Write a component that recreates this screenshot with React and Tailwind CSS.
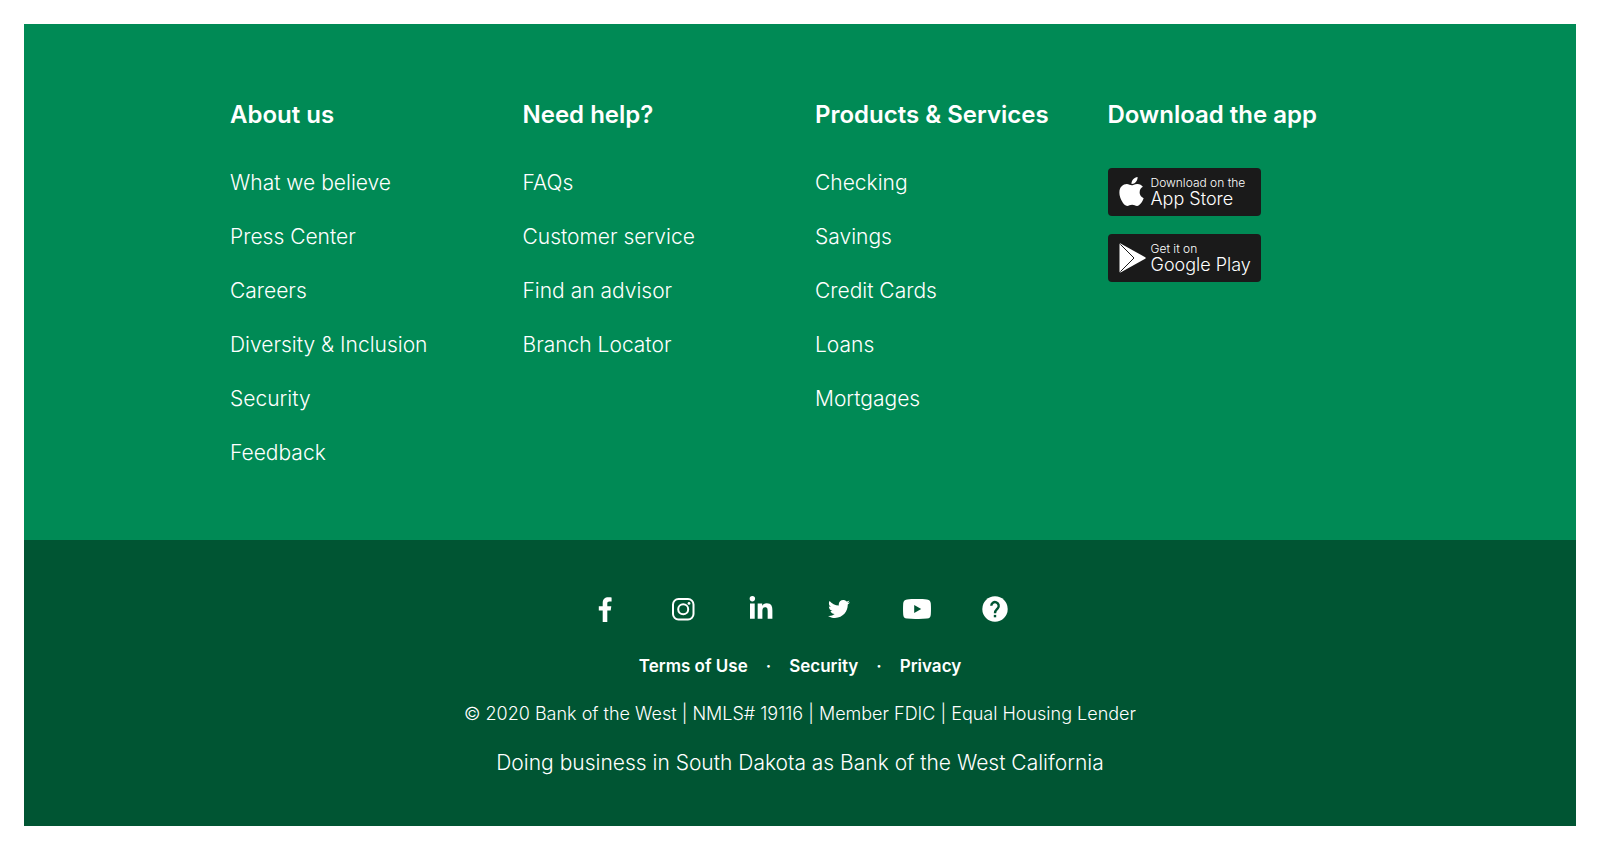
import React from "react";
import { FaApple, FaLinkedinIn, FaTwitter } from "react-icons/fa";

const columns = [
  { title: "About us", links: ["What we believe", "Press Center", "Careers", "Diversity & Inclusion", "Security", "Feedback"] },
  { title: "Need help?", links: ["FAQs", "Customer service", "Find an advisor", "Branch Locator"] },
  { title: "Products & Services", links: ["Checking", "Savings", "Credit Cards", "Loans", "Mortgages"] },
];

function FacebookIcon() {
  return (
    <svg viewBox="0 0 14 25" className="h-[25px] w-[14px]" fill="currentColor" aria-hidden="true">
      <path d="M4.700 25V13.600H.8V9.200h3.900V6C4.700 2.200 6.900.2 10.400.2c1.300 0 2.500.1 3.200.2v4h-2.200c-1.700 0-2.100.8-2.100 2v2.800h4l-.6 4.400H9.300V25Z" />
    </svg>
  );
}

function InstagramIcon() {
  return (
    <svg viewBox="0 0 24 24" className="size-6" fill="none" stroke="currentColor" strokeWidth="2" aria-hidden="true">
      <rect x="2" y="2" width="20.500" height="20.500" rx="5.500" />
      <circle cx="12.200" cy="12.200" r="5" />
      <circle cx="18" cy="6.400" r="1.400" fill="currentColor" stroke="none" />
    </svg>
  );
}

function YouTubeIcon() {
  return (
    <svg viewBox="0 0 28 20" className="h-5 w-7" fill="currentColor" aria-hidden="true">
      <path fillRule="evenodd" d="M14 0c4 0 7.500.15 10 .4C26.600.7 27.600 2 27.800 4.600c.25 3.600.25 7.200 0 10.800-.2 2.600-1.200 3.900-3.800 4.200-6.600.55-13.400.55-20 0C1.400 19.300.4 18 .2 15.400c-.25-3.600-.25-7.200 0-10.800C.4 2 1.400.7 4 .4 6.500.15 10 0 14 0ZM11.200 6v8l7-4Z" />
    </svg>
  );
}

function HelpIcon() {
  return (
    <svg viewBox="0 0 26 26" className="size-[26px]" fill="none" aria-hidden="true">
      <circle cx="13" cy="13" r="12.700" fill="currentColor" />
      <path d="M9.300 9.800a3.700 3.700 0 1 1 6.500 2.400c-1.200 1.400-2.800 2.100-2.800 5" stroke="#005533" strokeWidth="2.400" />
      <rect x="11.800" y="18.900" width="2.400" height="2.400" fill="#005533" />
    </svg>
  );
}

function PlayIcon() {
  return (
    <svg viewBox="0 0 27 30" className="w-full" aria-hidden="true">
      <path fill="#fff" d="M.5 1.800C.5.5 1.400.4 2.400.9L26.200 14.200c.7.400.7 1.200 0 1.600L2.400 29.100C1.400 29.600.5 29.500.5 28.200Z" />
      <path fill="none" stroke="#1a1a1a" strokeWidth="1" d="M1.400 1.400 15 15 1.400 28.600" />
    </svg>
  );
}

const socials = [
  { label: "Facebook", icon: <FacebookIcon /> },
  { label: "Instagram", icon: <InstagramIcon /> },
  { label: "LinkedIn", icon: <FaLinkedinIn className="size-[26px]" /> },
  { label: "Twitter", icon: <FaTwitter className="size-[22px]" /> },
  { label: "YouTube", icon: <YouTubeIcon /> },
  { label: "Help", icon: <HelpIcon /> },
];

function StoreBadge({ icon, small, large }) {
  return (
    <a href="#" className="flex h-12 w-[153px] items-center rounded bg-[#1a1a1a] pl-[11px]">
      <span className="flex w-[27px] shrink-0">{icon}</span>
      <span className="ml-[5px] flex flex-col font-[350] whitespace-nowrap">
        <span className="text-[12px] leading-[14px]">{small}</span>
        <span className="text-[18px] leading-[18px]">{large}</span>
      </span>
    </a>
  );
}

export default function App() {
  return (
    <div className="p-6 font-['Inter',sans-serif] text-white">
      <footer>
        <div className="bg-[#008a55] pt-[73px] pb-[72px]">
          <div className="mx-auto grid max-w-[1170px] grid-cols-4">
            {columns.map((c) => (
              <nav key={c.title} aria-label={c.title} className="px-[15px]">
                <h2 className="mb-[35px] text-2xl leading-9 font-semibold whitespace-nowrap">{c.title}</h2>
                <ul className="flex flex-col gap-6">
                  {c.links.map((l) => (
                    <li key={l} className="text-[21px] leading-[30px] font-[350]"><a href="#">{l}</a></li>
                  ))}
                </ul>
              </nav>
            ))}
            <section className="px-[15px]">
              <h2 className="mb-[35px] text-2xl leading-9 font-semibold whitespace-nowrap">Download the app</h2>
              <div className="flex flex-col gap-[18px]">
                <StoreBadge icon={<FaApple className="mb-0.5 -ml-1 size-[33px] shrink-0" />} small="Download on the" large="App Store" />
                <StoreBadge icon={<PlayIcon />} small="Get it on" large="Google Play" />
              </div>
            </section>
          </div>
        </div>
        <div className="flex flex-col items-center bg-[#005533] pt-[54px] pb-12 text-center">
          <ul className="flex">
            {socials.map((s) => (
              <li key={s.label}>
                <a href="#" aria-label={s.label} className="flex h-[30px] w-[78px] items-center justify-center">{s.icon}</a>
              </li>
            ))}
          </ul>
          <nav aria-label="Legal" className="mt-7 flex gap-[18px] text-[17px] leading-7 font-semibold">
            <a href="#">Terms of Use</a>
            <span>·</span>
            <a href="#">Security</a>
            <span>·</span>
            <a href="#">Privacy</a>
          </nav>
          <p className="mt-5 text-[18px] leading-7 font-light">© 2020 Bank of the West | NMLS# 19116 | Member FDIC | Equal Housing Lender</p>
          <p className="mt-5 text-[21px] leading-[30px] font-[350]">Doing business in South Dakota as Bank of the West California</p>
        </div>
      </footer>
    </div>
  );
}
